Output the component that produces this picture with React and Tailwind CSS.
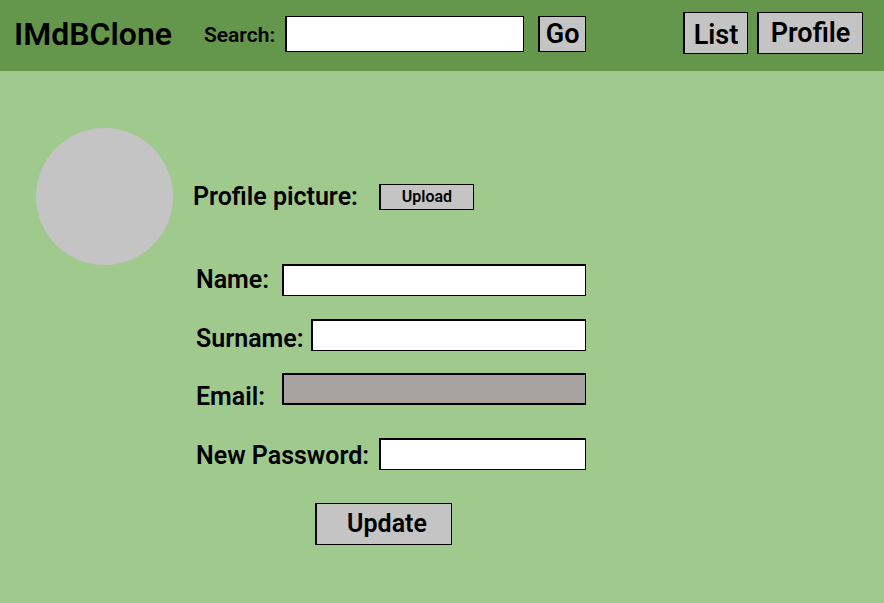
function Field({ id, label, type = 'text', readOnly = false, className }) {
  return (
    <div className={`flex w-[390px] max-w-full items-start ${className}`}>
      <label htmlFor={id} className="shrink-0 text-[25px] leading-8">
        {label}
      </label>
      <input
        id={id}
        type={type}
        readOnly={readOnly}
        className={`h-8 min-w-0 flex-1 border border-t-2 border-l-2 border-black px-2 text-base ${readOnly ? 'border-b-2 bg-[#a8a2a0]' : 'bg-white'}`}
      />
    </div>
  );
}

export default function App() {
  return (
    <div className="min-h-screen bg-[#a0c98e] font-['Roboto',sans-serif] font-semibold text-black">
      <header className="flex h-[71px] items-start bg-[#64974b] pr-[21px] pl-[14px]">
        <h1 className="pt-[14px] text-[32px] leading-10">IMdBClone</h1>
        <form className="ml-8 flex items-center pt-4" onSubmit={(e) => e.preventDefault()}>
          <label htmlFor="search" className="pt-0.5 text-[21px] leading-8">
            Search:
          </label>
          <input id="search" type="search" className="ml-2.5 h-9 w-[239px] border border-l-2 border-black bg-white px-2" />
          <button type="submit" className="ml-3.5 h-9 w-12 border border-l-2 border-black bg-[#c4c4c4] text-[27px] leading-8">
            Go
          </button>
        </form>
        <nav className="ml-auto flex gap-[9px] pt-3">
          <button type="button" className="h-[42px] w-[65px] border border-l-2 border-black bg-[#c4c4c4] pt-1 text-[27px] leading-8">
            List
          </button>
          <button type="button" className="h-[42px] w-[106px] border border-l-2 border-black bg-[#c4c4c4] text-[27px] leading-8">
            Profile
          </button>
        </nav>
      </header>
      <main className="flex items-start px-9 pt-[57px]">
        <div role="img" aria-label="Profile picture" className="size-[137px] shrink-0 rounded-full bg-[#c4c4c4]" />
        <form className="ml-5 pt-[53px]" onSubmit={(e) => e.preventDefault()}>
          <div className="flex items-center gap-[21px]">
            <span className="text-[25px] leading-8">Profile picture:</span>
            <button type="button" className="h-[26px] w-[95px] border border-l-2 border-black bg-[#c4c4c4] text-base leading-5">
              Upload
            </button>
          </div>
          <div className="mt-[51px] ml-[3px] flex flex-col">
            <Field id="name" label="Name:" className="gap-[13px]" />
            <Field id="surname" label="Surname:" className="mt-[23px] gap-[7px] [&>label]:pt-1" />
            <Field id="email" label="Email:" type="email" readOnly className="mt-[18px] gap-[17px] [&>label]:pt-2" />
            <Field id="password" label="New Password:" type="password" className="mt-[25px] gap-2.5 [&>label]:pt-0.5" />
          </div>
          <button type="submit" className="mt-[31px] ml-[122px] h-[42px] w-[137px] border border-l-2 border-black bg-[#c4c4c4] pl-1.5 text-[25px] leading-8">
            Update
          </button>
        </form>
      </main>
    </div>
  );
}
